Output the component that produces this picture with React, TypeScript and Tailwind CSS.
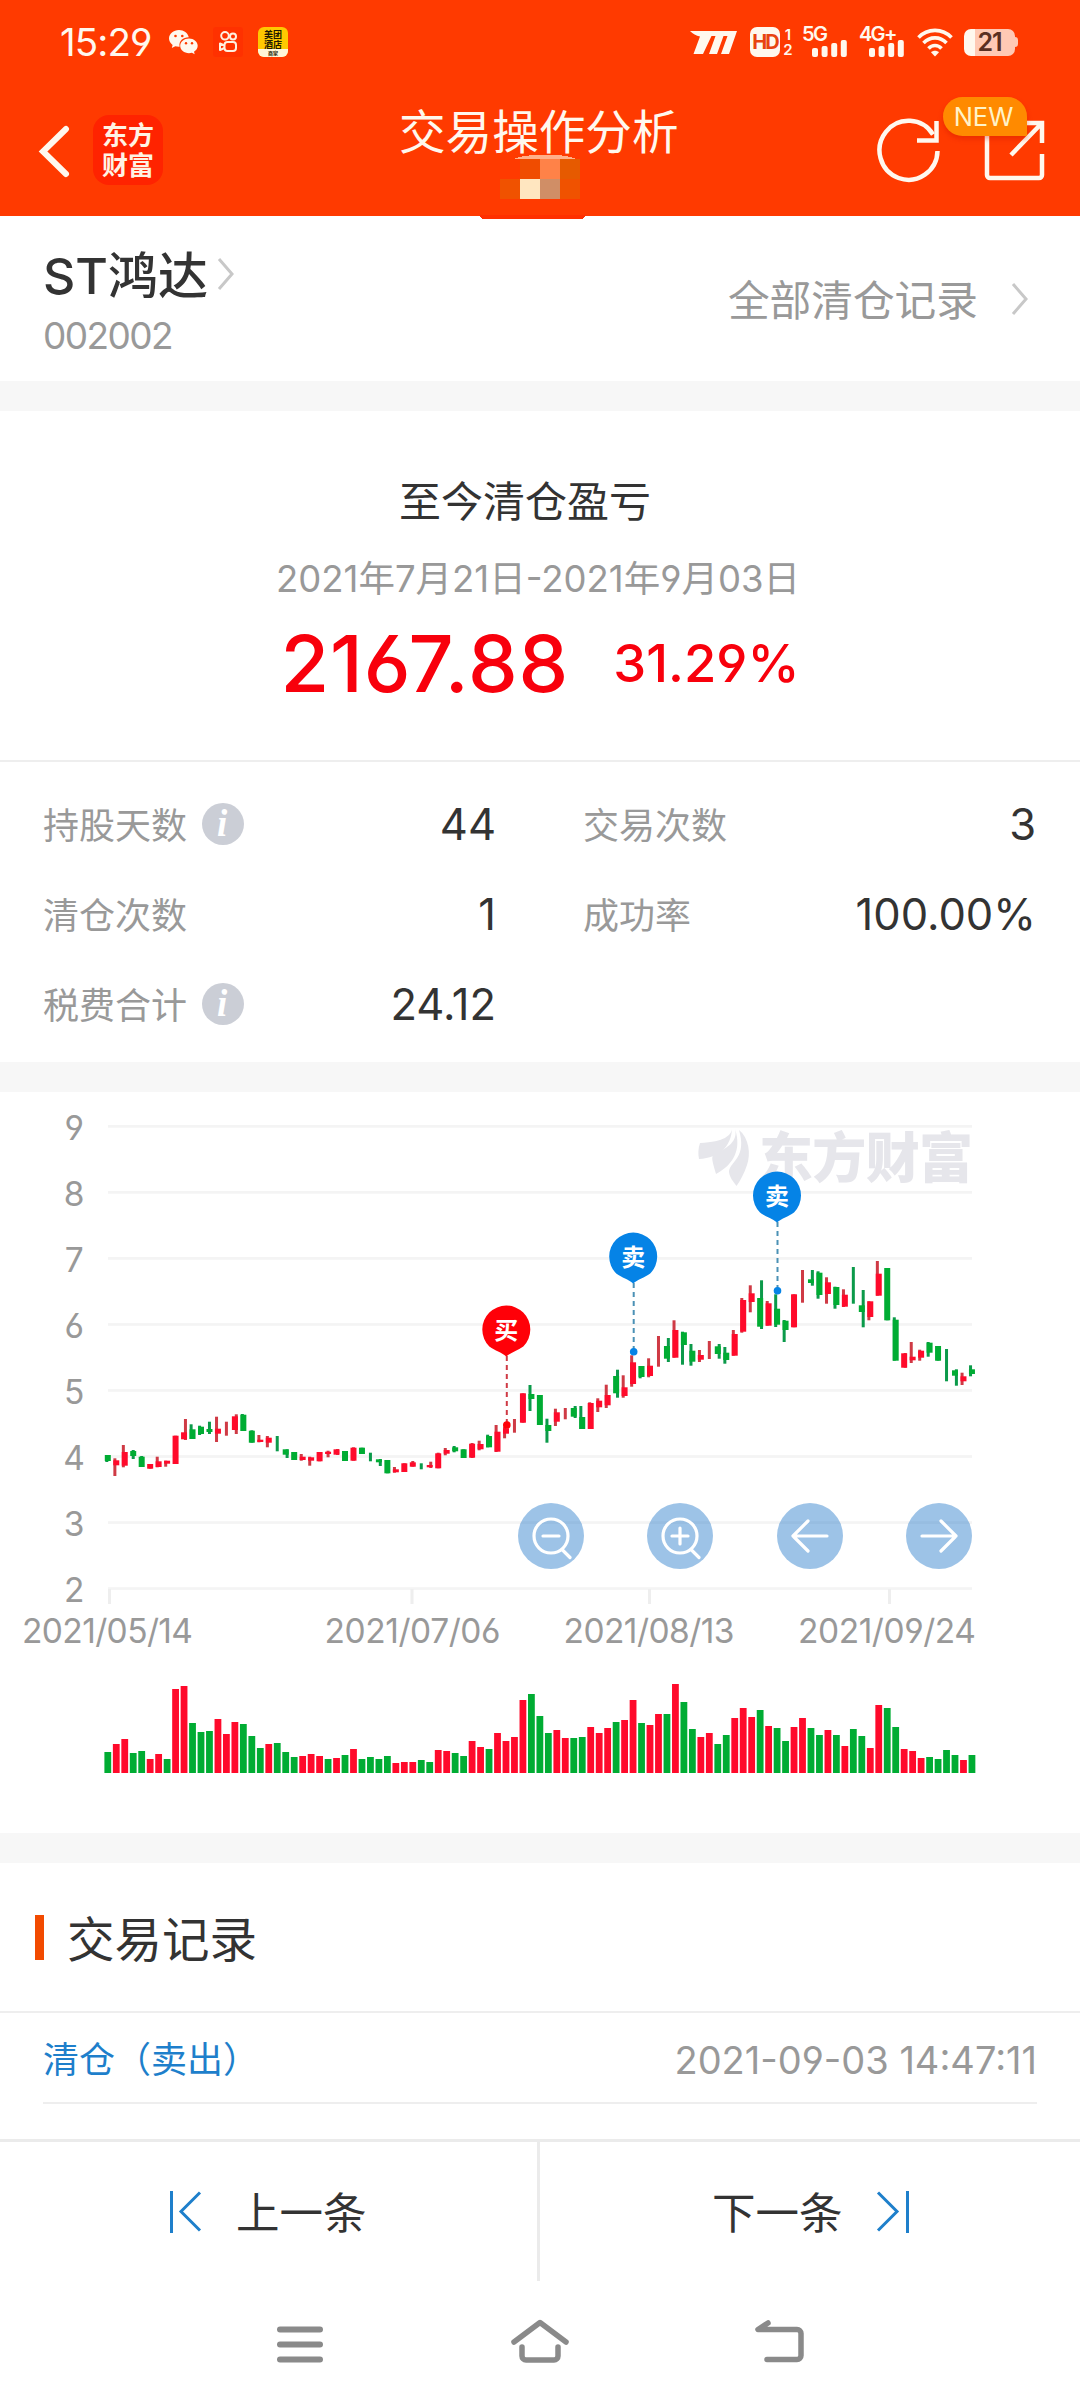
import type { ReactNode } from "react";

type Tone = "r" | "g";

const TONE: Record<Tone, string> = { r: "#ff0a2b", g: "#00ac33" };
const WICK: Record<Tone, string> = { r: "#cf3a45", g: "#0b9a4a" };

// [tone, body top, body bottom, wick top, wick bottom, wick offset]
const CANDLES: [Tone, number, number, number, number, number][] = [
  ["g", 363, 369, 363, 370, -1],
  ["r", 368.3, 373.3, 366.3, 384, -1.4],
  ["r", 360, 373.7, 353, 375.3, -1.4],
  ["g", 359, 364, 358, 367, 0],
  ["g", 364.7, 375, 364, 375, 0],
  ["r", 372, 376.7, 372, 376.7, 0],
  ["r", 369.3, 375, 364.7, 375.3, -1.4],
  ["r", 368.7, 371.7, 368.7, 374.7, -1.4],
  ["r", 343.7, 372, 343.7, 372, 0],
  ["r", 340.3, 347.3, 327, 348, 1.4],
  ["g", 337.3, 347, 332.3, 347, -1.4],
  ["g", 334.7, 342, 333.7, 343, -1.4],
  ["g", 337, 340, 329.7, 342, 0],
  ["r", 336.7, 341.7, 324.7, 350, -1.4],
  ["r", 0, 0, 329.7, 343.7, 0],
  ["r", 324.3, 338, 322.3, 342, 1.4],
  ["g", 322.7, 339, 322, 339, -1],
  ["g", 338.7, 350.7, 338.3, 350.7, 0],
  ["r", 347.7, 350, 343, 350.3, -1.4],
  ["r", 345.7, 350.7, 344, 355.3, -1.4],
  ["g", 0, 0, 344, 359.3, 0],
  ["g", 357.3, 362.7, 357.3, 366, 1.4],
  ["g", 360, 368, 360, 368, 0],
  ["r", 364.7, 368, 362, 368.7, -1.4],
  ["r", 365.3, 368.7, 364.7, 373.7, -1.4],
  ["r", 360, 369.3, 360, 369.3, 0],
  ["r", 359.7, 362, 358.7, 365.3, 0],
  ["r", 357.3, 362.7, 357, 363, 1],
  ["g", 359, 369, 359, 369, 0],
  ["r", 355.7, 368.7, 355.3, 368.7, 0],
  ["g", 355.7, 362, 355.7, 362, 0],
  ["g", 0, 0, 360.7, 369.3, 0],
  ["g", 367.3, 370.3, 367, 374, 1.4],
  ["g", 368, 381.3, 368, 381.3, 0],
  ["r", 377.3, 380.3, 375, 380.7, -1.4],
  ["r", 371.3, 380, 371.3, 380, 0],
  ["r", 370.3, 374.7, 369, 374.7, 0],
  ["g", 0, 0, 371.3, 377.3, 0],
  ["r", 373, 375.3, 369.7, 376, 1],
  ["r", 361.3, 376.3, 360.7, 376.3, 0],
  ["r", 358, 361.7, 356, 363.3, -1.4],
  ["g", 355.3, 359.3, 354, 360.3, -1],
  ["g", 357.3, 366, 357.3, 366, 0],
  ["r", 351.7, 365.7, 351, 366, 0],
  ["r", 352, 357.3, 348.7, 358.3, -1.4],
  ["g", 344, 355.3, 342.7, 355.3, -1.4],
  ["r", 339.7, 359.7, 333, 360, -1.4],
  ["r", 336.3, 341.7, 334.7, 346.3, -1.4],
  ["r", 0, 0, 327, 340.7, 0],
  ["r", 301.3, 330.7, 301.3, 330.7, 0],
  ["g", 302, 307, 293, 319, -1.4],
  ["g", 303, 333, 303, 333, 0],
  ["g", 333, 339, 326.7, 350.7, -1.4],
  ["r", 320.3, 329.7, 316.7, 334, -1.4],
  ["r", 0, 0, 316, 327.3, 0],
  ["g", 316, 324.7, 314, 326, 1.4],
  ["g", 325, 337, 314, 337, -1.4],
  ["r", 311, 337, 310.3, 337, -1],
  ["r", 308.7, 315.3, 306.3, 320, -1.4],
  ["r", 303, 313.3, 292.7, 316, -1.4],
  ["g", 284, 301.3, 277.7, 305.7, 1.4],
  ["r", 295.3, 304, 283.3, 305.7, -1.4],
  ["r", 270.3, 292, 263.3, 294.7, -1.4],
  ["g", 274, 285, 274, 286.3, -1.4],
  ["r", 273.7, 284, 266.3, 285.3, -1.4],
  ["r", 0, 0, 244, 274.7, 0],
  ["g", 254, 266.7, 246, 270, 1.4],
  ["r", 238, 265.7, 228.3, 265.7, -1.4],
  ["g", 240.3, 253, 239.7, 272.7, -1.4],
  ["g", 258.7, 269.7, 252, 273.7, -1.4],
  ["r", 263, 267.7, 258, 270, -1.4],
  ["r", 0, 0, 249, 267, 0],
  ["g", 254.3, 262, 252, 266.7, 1.4],
  ["g", 260.7, 268, 255, 271.7, -1.4],
  ["r", 242, 263.7, 238, 263.7, -1.4],
  ["r", 208, 239.7, 206, 240.7, -1.4],
  ["r", 201.3, 210, 193.3, 220.3, -1.4],
  ["g", 206, 234.7, 188.3, 237, 1.4],
  ["r", 211.3, 233.7, 209, 233.7, -1.4],
  ["g", 216.7, 232.7, 202.3, 235, -1.4],
  ["g", 228.7, 238, 228, 250, -1.4],
  ["r", 202.3, 235.3, 202.3, 235.3, 0],
  ["r", 0, 0, 178, 210.7, 0],
  ["g", 187.3, 191, 178, 193.7, 1.4],
  ["g", 180.7, 203, 179.3, 206.7, -1.4],
  ["r", 190.3, 202, 185.3, 211.7, -1.4],
  ["g", 195, 213, 194.7, 216.7, -1.4],
  ["r", 202.7, 214.7, 197.3, 215, -1.4],
  ["g", 0, 0, 175, 211.7, 0],
  ["g", 213.3, 220, 198, 235.3, 1.4],
  ["r", 209.3, 225, 209.3, 228.3, -1.4],
  ["r", 181.7, 203.7, 169, 203.7, -1.4],
  ["g", 176, 228.3, 176, 228.3, 0],
  ["g", 227.7, 268.7, 225.3, 268.7, -1.4],
  ["r", 261.3, 275.7, 261, 275.7, 1],
  ["r", 264.7, 268.3, 250, 271, -1.4],
  ["r", 258.7, 265.7, 257.7, 268.7, -1.4],
  ["g", 250.7, 260.7, 250, 264.7, -1.4],
  ["g", 254, 268.7, 254, 268.7, 0],
  ["g", 0, 0, 257, 289.3, 0],
  ["g", 278.3, 283.7, 277.3, 293.7, 1.4],
  ["r", 284.3, 289.3, 280.7, 293, -1.4],
  ["g", 277.3, 282, 273.3, 284.3, -1.4],
];

const VOLUME_TONES =
  "grrggrrgrrgggrrrgggrgggrrrgrgrggggrrrggrrggrrgrrrrgggrrggrrrgrrgrrgrggrrggrrrgrggrrggrgrggrrggrrrggggrg";

const VOLUMES = [
  21, 29, 34, 20, 22, 14, 19, 14, 84, 87, 50, 41, 42, 54, 39, 51, 49, 37, 25, 29,
  30, 21, 16, 17, 19, 17, 14, 15, 18, 24, 14, 16, 14, 17, 10, 11, 11, 13, 11, 23,
  22, 20, 17, 32, 26, 24, 40, 32, 36, 73, 79, 57, 40, 43, 35, 35, 36, 46, 40, 45,
  51, 53, 73, 50, 48, 59, 59, 89, 71, 44, 36, 40, 29, 38, 55, 65, 56, 63, 47, 45,
  32, 46, 55, 45, 38, 43, 38, 27, 44, 37, 25, 68, 65, 46, 24, 22, 15, 16, 14, 23,
  18, 13, 18,
];

const DATES = [
  { label: "2021/05/14", tick: 109.5, x: 22, width: 171 },
  { label: "2021/07/06", tick: 412, x: 324.5, width: 176 },
  { label: "2021/08/13", tick: 649.5, x: 563.5, width: 171 },
  { label: "2021/09/24", tick: 889.5, x: 798, width: 178 },
];

const PINS = [
  { label: "买", x: 506.3, y: 238, dot: 333, color: "#ff0008", line: "#cf3a45" },
  { label: "卖", x: 633.2, y: 165, dot: 259.7, color: "#0583e6", line: "#4b91b5" },
  { label: "卖", x: 777, y: 104, dot: 198.7, color: "#0583e6", line: "#4b91b5" },
];

const candleX = (i: number) => 107.8 + i * 8.472;

function SignalBars() {
  return (
    <svg width="36" height="17" viewBox="0 0 36 17" fill="#fff8ee">
      <rect x="0" y="8" width="6" height="9" rx="2" />
      <rect x="9.6" y="6" width="6" height="11" rx="2" />
      <rect x="19.2" y="3" width="6" height="14" rx="2" />
      <rect x="28.8" y="0" width="6" height="17" rx="2" />
    </svg>
  );
}

function StatusBar() {
  return (
    <div className="flex h-[84px] items-center pl-[60px] pr-[62px] text-[#fff8ee]">
      <span className="w-[100px] whitespace-nowrap text-[38.500px] leading-none tracking-[-0.900px]">15:29</span>
      <svg className="ml-[9px]" width="29" height="25" viewBox="0 0 29 25" fill="#fff8ee">
        <path d="M10 0C4.5 0 0 3.8 0 8.5c0 2.600 1.400 4.800 3.600 6.400L2.800 18l3.500-1.800c1.100.3 2.300.5 3.700.5h.6C9.500 11 14 7.300 19.800 7.300 18.800 3 14.800 0 10 0z" />
        <path d="M20 8.400c-4.900 0-8.800 3.300-8.800 7.400s3.900 7.400 8.800 7.400c1 0 2-.1 2.900-.4l2.800 1.500-.7-2.500c2.200-1.400 3.700-3.500 3.700-6 0-4.100-3.900-7.400-8.700-7.400z" />
        <g fill="#ff3a00">
          <circle cx="6.500" cy="6" r="1.300" />
          <circle cx="13.300" cy="6" r="1.300" />
          <circle cx="17" cy="13.300" r="1.200" />
          <circle cx="23" cy="13.300" r="1.200" />
        </g>
      </svg>
      <svg className="ml-[15px]" width="30" height="30" viewBox="0 0 30 30">
        <rect width="30" height="30" rx="3" fill="#ff3100" />
        <g fill="none" stroke="#fff0e0" strokeWidth="2">
          <circle cx="12" cy="8.800" r="3.800" />
          <circle cx="20" cy="9.600" r="3" />
          <rect x="11.500" y="15" width="11.500" height="9" rx="3" />
          <path d="M11.500 18.500L7 16.500v6.500l4.500-2" strokeLinejoin="round" />
        </g>
      </svg>
      <div className="ml-[15px] flex h-[30px] w-[30px] flex-col items-center overflow-hidden rounded-[6px] bg-[#ffc800] pt-[3px] text-[9px] font-bold leading-[9.500px] text-[#201800]">
        <span>美团</span>
        <span>酒店</span>
        <span className="w-full grow bg-[#fff6d8] text-center text-[5px] leading-[8px]">商家</span>
      </div>

      <svg className="ml-auto" width="48" height="23" viewBox="0 0 48 23" fill="#fff8ee">
        <path d="M0 0h47L39 23h-8l6.500-18h-4L27 23h-8l6.500-18h-4L13 23H3.500L10 5.500C6 4.500 3 3 0 0z" />
      </svg>
      <div className="ml-[12px] flex h-[30px] w-[30px] items-center justify-center rounded-[7px] bg-[#fff8ee] text-[20px] font-bold leading-none tracking-[-2px] text-[#e84310]">
        HD
      </div>
      <div className="ml-[2px] flex w-[12px] flex-col items-center text-[15px] font-semibold leading-[15px]">
        <span>1</span>
        <span>2</span>
      </div>
      <div className="ml-[8px] flex h-[30px] w-[46px] flex-col">
        <span className="h-[13px] text-[20px] font-semibold leading-[14px] tracking-[-1.500px]">5G</span>
        <span className="ml-[10px]">
          <SignalBars />
        </span>
      </div>
      <div className="ml-[11px] flex h-[30px] w-[46px] flex-col">
        <span className="h-[13px] text-[20px] font-semibold leading-[14px] tracking-[-1.700px]">4G+</span>
        <span className="ml-[10px]">
          <SignalBars />
        </span>
      </div>
      <svg className="ml-[12px]" width="36" height="29" viewBox="0 0 36 29" fill="none" stroke="#fff8ee" strokeWidth="3.600">
        <path d="M1.500 9.500C10.500 0 25.500 0 34.500 9.500" />
        <path d="M6.500 15c6.500-6.800 16.500-6.800 23 0" />
        <path d="M11.500 20.500c3.700-4 9.300-4 13 0" />
        <path d="M18 28.500l-4-4.300c2.300-2 5.700-2 8 0z" fill="#fff8ee" stroke="none" />
      </svg>
      <div className="ml-[11px] flex items-center">
        <div className="flex h-[27px] w-[51px] items-center justify-center rounded-[7px] bg-[linear-gradient(to_right,#fff8ee_11px,#ffc9b4_11px)] text-[25px] font-semibold leading-none tracking-[-1px] text-[#5a2f22]">
          21
        </div>
        <div className="h-[10px] w-[3px] rounded-r bg-[#ffc9b4]" />
      </div>
    </div>
  );
}

function Header() {
  return (
    <header className="relative h-[216px] bg-[#ff3a00]">
      <StatusBar />
      <div className="relative flex h-[132px] items-start">
        <svg className="ml-[38px] mt-[41px]" width="34" height="53" viewBox="0 0 34 53" fill="none" stroke="#fff8ee" strokeWidth="6" strokeLinecap="round">
          <path d="M28 4L5 26.500L28 49" />
        </svg>
        <div className="ml-[21px] mt-[31px] flex h-[70px] w-[70px] flex-col items-center justify-center rounded-[16px] bg-[#ff2300] pt-[2px] text-[26px] font-bold leading-[30px] text-[#fff3e4]">
          <span>东方</span>
          <span>财富</span>
        </div>
        <h1 className="ml-[236px] mt-[17px] text-[46.600px] leading-[62px] text-[#fff8ee]">交易操作分析</h1>
        <svg className="ml-auto mt-[32px]" width="68" height="68" viewBox="0 0 68 68" fill="none" stroke="#fff8ee" strokeWidth="4.500">
          <path d="M63.500 35A29 29.500 0 1 1 59 18.500" />
          <path d="M62.500 5v19.500H43" />
        </svg>
        <div className="relative ml-[37px] mr-[35px] mt-[32px] h-[68px] w-[66px]">
          <svg width="66" height="68" viewBox="0 0 66 68" fill="none" stroke="#fff8ee" strokeWidth="4.500">
            <path d="M8 6V59a3 3 0 0 0 3 3H60a3 3 0 0 0 3-3V38" />
            <path d="M45 7H63V27M63 7L32 39" />
          </svg>
          <span className="absolute -left-[36px] -top-[19px] flex h-[39px] w-[84px] items-center justify-center rounded-[20px] rounded-br-none bg-[#ff8a00] pr-[3px] text-[25.500px] leading-none text-[#fff3c8] shadow-[0_3px_5px_rgba(200,20,0,0.350)]">
            NEW
          </span>
        </div>
      </div>
      {/* pixelated account name under the title */}
      <svg className="absolute left-[479px] top-[154px]" width="107" height="66" viewBox="0 0 107 66" shapeRendering="crispEdges">
        <path d="M34 5c15-6 50-6 64 0z" fill="#ffb08a" />
        <rect x="41" y="5" width="20" height="20" fill="#f04c00" />
        <rect x="61" y="5" width="20" height="20" fill="#ff8248" />
        <rect x="81" y="5" width="20" height="20" fill="#e65a00" />
        <rect x="21" y="25" width="20" height="20" fill="#f05200" />
        <rect x="41" y="25" width="20" height="20" fill="#ffe6c0" />
        <rect x="61" y="25" width="20" height="20" fill="#d08e66" />
        <rect x="81" y="25" width="20" height="20" fill="#f05200" />
        <path d="M0 61h107l-3 4H3z" fill="#ff3000" />
      </svg>
    </header>
  );
}

function Chevron({ className }: { className: string }) {
  return (
    <svg className={className} width="18" height="34" viewBox="0 0 18 34" fill="none" stroke="#c8c8c8" strokeWidth="3">
      <path d="M2 2L15 17L2 32" />
    </svg>
  );
}

function InfoIcon() {
  return (
    <span className="mb-[3px] ml-[15px] flex h-[42px] w-[42px] items-center justify-center rounded-full bg-[#cbced6] pr-[2px] font-['Liberation_Serif',serif] text-[37px] font-bold italic leading-none text-white">
      i
    </span>
  );
}

function Stat({ label, value, info }: { label: string; value: string; info?: boolean }) {
  return (
    <div className="flex h-[90px] items-center">
      <span className="pt-px text-[36px] leading-none text-[#999]">{label}</span>
      {info && <InfoIcon />}
      <span className="ml-auto text-[43.500px] leading-none text-[#333]">{value}</span>
    </div>
  );
}

function ChartButton({ x, children }: { x: number; children: ReactNode }) {
  return (
    <g transform={`translate(${x} 444)`} fill="none" stroke="#fff" strokeWidth="3.200" strokeLinecap="round" strokeLinejoin="round">
      <circle r="33" fill="#1b74c8" fillOpacity="0.430" stroke="none" />
      {children}
    </g>
  );
}

function Chart() {
  return (
    <svg className="block" width="1080" height="741" viewBox="0 0 1080 741">
      {[9, 8, 7, 6, 5, 4, 3, 2].map((price, i) => (
        <g key={price}>
          <rect x="108" y={33 + i * 66.03} width="864" height="2.700" fill="#f4f4f4" />
          <text x="74.200" y={47.500 + i * 66.03} textAnchor="middle" fontSize="33.500" fill="#999">
            {price}
          </text>
        </g>
      ))}
      {DATES.map((d) => (
        <g key={d.label}>
          <rect x={d.tick - 1.5} y="497" width="3" height="15" fill="#eee" />
          <text x={d.x} y="550.500" fontSize="33.500" fill="#999" textLength={d.width} lengthAdjust="spacing">
            {d.label}
          </text>
        </g>
      ))}

      {/* watermark */}
      <g fill="#e6e6eb">
        <path d="M732 37C731 43 725 50 700 51C698 57 698 62 699 67C720 66 731 54 732 37z" />
        <path d="M735 37C738 48 729 56 714 62C711 65 712 68 716 82C733 73 742 58 735 37z" />
        <path d="M739 38C749 46 751 62 747 73C744 82 740 89 736.500 94C732 88 729 84 729 79C731 69 747 65 739 38z" />
        <text x="759" y="86" fontSize="54" fontWeight="900" textLength="214" lengthAdjust="spacing">
          东方财富
        </text>
      </g>

      {CANDLES.map(([tone, top, bottom, high, low, dx], i) => (
        <g key={i}>
          <rect x={candleX(i) - 1.5 + dx} y={high} width="3" height={low - high} fill={WICK[tone]} />
          {bottom > top && (
            <rect x={candleX(i) - 3} y={top} width="6" height={bottom - top} fill={TONE[tone]} />
          )}
        </g>
      ))}
      {VOLUMES.map((v, i) => (
        <rect key={i} x={candleX(i) - 3.4} y={681 - v} width="6.800" height={v} fill={TONE[VOLUME_TONES[i] as Tone]} />
      ))}

      {PINS.map((p) => (
        <g key={p.x} transform={`translate(${p.x} ${p.y})`}>
          <path d={`M0.500 26V${p.dot - p.y}`} stroke={p.line} strokeWidth="2" strokeDasharray="5 4" />
          <circle cx="0.500" cy={p.dot - p.y} r="3.800" fill={p.color} />
          <path d="M0 26.500C-5 22-11 21-17 16.500A24 24 0 1 1 17 16.500C11 21 5 22 0 26.500z" fill={p.color} />
          <text y="8.500" textAnchor="middle" fontSize="24" fontWeight="700" fill="#fff">
            {p.label}
          </text>
        </g>
      ))}

      <ChartButton x={551}>
        <path d="M17 0A17 17 0 1 1-17 0A17 17 0 1 1 17 0M-8 0H8M11.500 14L19 21.500" />
      </ChartButton>
      <ChartButton x={680}>
        <path d="M17 0A17 17 0 1 1-17 0A17 17 0 1 1 17 0M-8 0H8M0-8V8M11.500 14L19 21.500" />
      </ChartButton>
      <ChartButton x={810}>
        <path d="M17 0H-17M-2-15L-17 0L-2 15" />
      </ChartButton>
      <ChartButton x={939}>
        <path d="M-17 0H17M2-15L17 0L2 15" />
      </ChartButton>
    </svg>
  );
}

function Gap() {
  return <div className="h-[30px] bg-[#f7f7f7]" />;
}

export default function App() {
  return (
    <div className="flex h-[2408px] w-[1080px] flex-col overflow-hidden bg-white font-[Inter,'Noto_Sans_CJK_SC',sans-serif] text-[#333] [font-feature-settings:'cv03','cv04']">
      <Header />

      <section className="flex h-[165px] pl-[43px] pr-[51px]">
        <div>
          <div className="mt-[32px] flex h-[56px] items-center text-[50px] font-medium leading-none">
            <span>ST鸿达</span>
            <Chevron className="mb-[4px] ml-[9px]" />
          </div>
          <div className="mt-[12px] text-[37px] leading-[40px] tracking-[-1.600px] text-[#999]">002002</div>
        </div>
        <div className="ml-auto mt-[60px] flex h-[50px] items-center text-[41.700px] leading-none text-[#999]">
          <span className="pt-[2px]">全部清仓记录</span>
          <Chevron className="mb-[4px] ml-[33px]" />
        </div>
      </section>
      <Gap />

      <section className="flex h-[351px] flex-col items-center border-b-2 border-[#eee]">
        <h2 className="mr-[30px] mt-[66px] text-[42px] leading-[50px]">至今清仓盈亏</h2>
        <p className="mr-[4px] mt-[30px] whitespace-nowrap text-[36.500px] leading-[44px] text-[#999]">
          2021年7月21日-2021年9月03日
        </p>
        <div className="mt-[22px] flex h-[80px] items-center gap-[44px] leading-none text-[#f8000c]">
          <span className="text-[79px] font-[540] tracking-[1px]">2167.88</span>
          <span className="text-[52.500px] font-medium">31.29%</span>
        </div>
      </section>

      <section className="grid h-[300px] grid-cols-[453px_453px] content-start justify-between pl-[43px] pr-[44px] pt-[18px]">
        <Stat label="持股天数" value="44" info />
        <Stat label="交易次数" value="3" />
        <Stat label="清仓次数" value="1" />
        <Stat label="成功率" value="100.00%" />
        <Stat label="税费合计" value="24.12" info />
      </section>
      <Gap />

      <section className="h-[741px]">
        <Chart />
      </section>
      <Gap />

      <section className="h-[276px]">
        <div className="flex h-[150px] items-center border-b-2 border-[#eee] pl-[35px]">
          <span className="h-[45px] w-[9px] bg-[#f24a00]" />
          <h2 className="ml-[23px] pt-[5px] text-[47.500px] leading-none">交易记录</h2>
        </div>
        <div className="mx-[43px] flex h-[91px] items-center justify-between border-b-2 border-[#eee] pt-[4px] text-[36px] leading-none">
          <span className="text-[#1e7fcb]">清仓（卖出）</span>
          <span className="text-[38px] text-[#999]">2021-09-03 14:47:11</span>
        </div>
      </section>

      <footer className="flex h-[142px] border-t-[3px] border-[#ebebeb] text-[43.500px] leading-none">
        <button className="flex flex-1 items-center border-r-[3px] border-[#ebebeb] pl-[169px] pt-px">
          <svg width="34" height="44" viewBox="0 0 34 44" fill="none" stroke="#1e7fcb" strokeWidth="3">
            <path d="M2.500 1V43M31 2.500L12 21.500L31 40.500" />
          </svg>
          <span className="ml-[33px] pt-[3px]">上一条</span>
        </button>
        <button className="flex flex-1 items-center pl-[172px] pt-px">
          <span className="pt-[3px]">下一条</span>
          <svg className="ml-[33px]" width="34" height="44" viewBox="0 0 34 44" fill="none" stroke="#1e7fcb" strokeWidth="3">
            <path d="M31.500 1V43M2 2.500L21 21.500L2 40.500" />
          </svg>
        </button>
      </footer>

      <nav className="flex h-[127px] items-start pl-[276px] pt-[36px]">
        <svg width="48" height="52" viewBox="0 0 48 52" stroke="#8a8a8a" strokeWidth="6" strokeLinecap="round">
          <path d="M4 12.500H44M4 27.500H44M4 42.500H44" />
        </svg>
        <svg className="ml-[186px]" width="60" height="52" viewBox="0 0 60 52" fill="none" stroke="#8a8a8a" strokeWidth="5.500" strokeLinecap="round" strokeLinejoin="round">
          <path d="M4 25L30 5.500L56 25M12 30V39a4 4 0 0 0 4 4H44a4 4 0 0 0 4-4V30" />
        </svg>
        <svg className="ml-[183px]" width="52" height="52" viewBox="0 0 52 52" fill="none" stroke="#8a8a8a" strokeWidth="5.500" strokeLinecap="round" strokeLinejoin="round">
          <path d="M15 6L5 12.500H44a4 4 0 0 1 4 4V38.500a4 4 0 0 1-4 4H14" />
        </svg>
      </nav>
    </div>
  );
}
